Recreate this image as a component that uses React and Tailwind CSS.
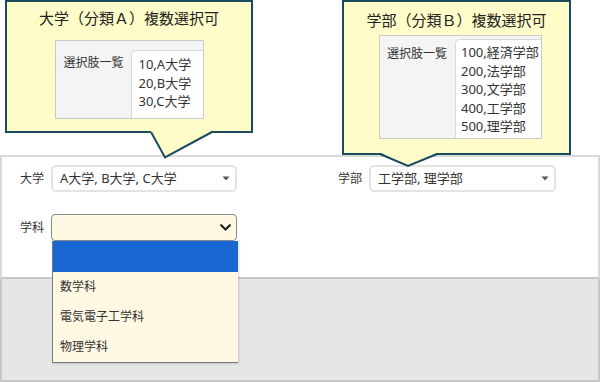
import React from 'react';

const font = "font-['Noto_Sans','Noto_Sans_CJK_JP',sans-serif]";

const Caret = () => (
  <svg width="8" height="5" viewBox="0 0 8 5" className="shrink-0">
    <path d="M0.5 0.5 L7.5 0.5 L4 4.5 Z" fill="#555" />
  </svg>
);

const Chevron = () => (
  <svg width="11" height="7" viewBox="0 0 11 7" className="shrink-0">
    <path d="M1.2 1.2 L5.5 5.5 L9.8 1.2" fill="none" stroke="#1e1e1e" strokeWidth="2.2" strokeLinecap="round" strokeLinejoin="round" />
  </svg>
);

const MultiSelect = ({ value, width }) => (
  <div className={`${width} h-[27px] flex items-center justify-between pl-[7px] pr-[5px] border-2 border-[#e3e3e3] rounded-[5px] bg-white text-[13px] text-[#333]`}>
    <span>{value}</span>
    <Caret />
  </div>
);

const Choices = ({ items, boxClass, labelClass, valueClass, textClass }) => (
  <div className={`${boxClass} flex border border-[#c9c9c9] bg-[#f4f4f4]`}>
    <div className={`${labelClass} w-[75px] shrink-0 text-[12px] leading-[18px] text-[#333]`}>選択肢一覧</div>
    <div className={`${valueClass} flex-1 bg-white border-l border-t border-[#d8d8d8] rounded-tl-[5px]`}>
      {items.map(t => (
        <div key={t} className={`${textClass} text-[13px] leading-[18.5px] text-[#333]`}>{t}</div>
      ))}
    </div>
  </div>
);

export default function App() {
  return (
    <div className={`${font} relative w-[600px] h-[382px] bg-white overflow-hidden flex flex-col`}>
      {/* form panel */}
      <div className="mt-[155px] h-[124px] border-2 border-b-[#c6c6c6] border-[#d8d8d8] bg-white pl-[18px] pt-[8px]">
        <div className="flex items-center">
          <div className="w-[318px] flex items-center">
            <span className="w-[31px] text-[12px] text-[#333]">大学</span>
            <MultiSelect value="A大学, B大学, C大学" width="w-[186px]" />
          </div>
          <div className="flex items-center">
            <span className="w-[31px] text-[12px] text-[#333]">学部</span>
            <MultiSelect value="工学部, 理学部" width="w-[187px]" />
          </div>
        </div>
        <div className="mt-[22px] flex items-center">
          <span className="w-[31px] text-[12px] text-[#333]">学科</span>
          <div className="w-[186px] h-[27px] flex items-center justify-end pr-[5px] border border-[#8a8a8a] rounded-[4px] bg-[#fff8e2]">
            <Chevron />
          </div>
        </div>
      </div>
      <div className="flex-1 bg-[#e6e6e6] border-x-2 border-b-2 border-[#c6c6c6]" />

      {/* open dropdown list */}
      <div className="absolute left-[52px] top-[241px] w-[186px] bg-[#fff8e3] border-l border-b border-[#7a7a7a] shadow-[1px_1px_2px_rgba(0,0,0,0.15)] text-[12px] text-[#333]">
        <div className="h-[31px] bg-[#1967d2]" />
        {['数学科', '電気電子工学科', '物理学科'].map(t => (
          <div key={t} className="h-[30px] flex items-center pl-[7px]">{t}</div>
        ))}
      </div>

      {/* callout A */}
      <div className="absolute left-[5px] top-0 w-[248px] h-[133px] border-2 border-[#1b4b5e] bg-[#fefcc9] flex flex-col items-center">
        <div className="pt-[6px] text-[15px] leading-[20px] text-[#222]">大学（分類Ａ）複数選択可</div>
        <Choices
          items={['10,A大学', '20,B大学', '30,C大学']}
          boxClass="mt-[12px] w-[149px] h-[79px]"
          labelClass="pl-[8px] pt-[13px]"
          valueClass="mt-[9px]"
          textClass="pl-[7px] first:pt-[4px]"
        />
      </div>
      <svg className="absolute left-[148px] top-[130px]" width="68" height="30" viewBox="0 0 68 30">
        <polygon points="2,0 17,28 66,0" fill="#fefcc9" />
        <polyline points="3,2 17,27.5 64,2" fill="none" stroke="#1b4b5e" strokeWidth="2" strokeLinejoin="miter" />
      </svg>

      {/* callout B */}
      <div className="absolute left-[342px] top-0 w-[229px] h-[155px] border-2 border-[#1b4b5e] bg-[#fefcc9] flex flex-col">
        <div className="pt-[8px] text-center text-[15px] leading-[20px] text-[#222]">学部（分類Ｂ）複数選択可</div>
        <Choices
          items={['100,経済学部', '200,法学部', '300,文学部', '400,工学部', '500,理学部']}
          boxClass="mt-[5px] ml-[35px] w-[163px] h-[104px]"
          labelClass="pl-[7px] pt-[9px]"
          valueClass="mt-[3px]"
          textClass="pl-[5px] first:pt-[3px]"
        />
      </div>
      <svg className="absolute left-[376px] top-[152px]" width="66" height="16" viewBox="0 0 66 16">
        <polygon points="3,0 32,14.5 63,0" fill="#fefcc9" />
        <polyline points="4,2 32,14 61,2" fill="none" stroke="#1b4b5e" strokeWidth="2" strokeLinejoin="miter" />
      </svg>
    </div>
  );
}
